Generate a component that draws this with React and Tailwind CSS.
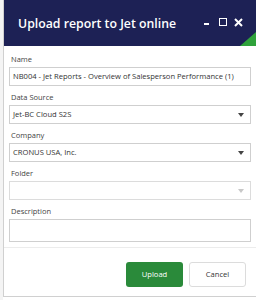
import React from 'react'

function Caret({ light }) {
  return (
    <svg width="6" height="4" viewBox="0 0 6 4" className="shrink-0">
      <path d="M0 0 L6 0 L3 4 Z" fill={light ? '#c8c8c8' : '#444'} />
    </svg>
  )
}

function Field({ label, children }) {
  return (
    <div className="flex flex-col">
      <label className="text-[7.5px] leading-[10px] text-[#444] mb-[3px] pl-[2px]">{label}</label>
      {children}
    </div>
  )
}

export default function App() {
  return (
    <div className="w-[256px] h-[300px] bg-white flex" style={{ fontFamily: '"Open Sans", "Noto Sans", sans-serif' }}>
      <div className="w-[3px] bg-[#f4f4f4]" />
      <div className="flex-1 flex flex-col border-l border-[#d0d0d0] h-[297px] border-b">
        {/* Header */}
        <div className="relative h-[46px] bg-[#1d2155] flex items-center pl-[14px] pr-[13px] overflow-hidden">
          <span className="text-white font-semibold text-[12.3px] mt-[2px]">Upload report to Jet online</span>
          <div className="ml-auto flex items-center gap-[7px] -mt-[2px]">
            <span className="w-[5px] h-[2px] bg-white mt-[4px]" />
            <span className="w-[8px] h-[8px] border-[1.5px] border-white ml-[3px]" />
            <svg width="9" height="9" viewBox="0 0 9 9">
              <path d="M1 1 L8 8 M8 1 L1 8" stroke="white" strokeWidth="2" />
            </svg>
          </div>
          <div className="absolute right-0 bottom-0 w-0 h-0 border-l-[16px] border-l-transparent border-b-[14px] border-b-[#2fa23b]" />
        </div>

        {/* Body */}
        <div className="flex flex-col gap-[6px] px-[5px] pt-[8px]">
          <Field label="Name">
            <div className="h-[19px] border border-[#cfcfcf] flex items-center px-[3px] text-[7.6px] text-[#333] whitespace-nowrap overflow-hidden">
              NB004 - Jet Reports - Overview of Salesperson Performance (1)
            </div>
          </Field>
          <Field label="Data Source">
            <div className="h-[19px] border border-[#cfcfcf] flex items-center px-[3px] pr-[6px] text-[7.6px] text-[#333]">
              <span>Jet-BC Cloud S2S</span>
              <span className="ml-auto"><Caret /></span>
            </div>
          </Field>
          <Field label="Company">
            <div className="h-[19px] border border-[#cfcfcf] flex items-center px-[3px] pr-[6px] text-[7.6px] text-[#333]">
              <span>CRONUS USA, Inc.</span>
              <span className="ml-auto"><Caret /></span>
            </div>
          </Field>
          <Field label="Folder">
            <div className="h-[19px] border border-[#dcdcdc] flex items-center px-[3px] pr-[6px] text-[7.6px]">
              <span className="ml-auto"><Caret light /></span>
            </div>
          </Field>
          <Field label="Description">
            <div className="h-[23px] border border-[#cfcfcf]" />
          </Field>
        </div>

        <div className="mt-[5px] border-t border-[#ececec]" />

        <div className="flex justify-end gap-[6px] pr-[10px] pt-[14px]">
          <button className="w-[57px] h-[25px] rounded-[3px] bg-[#2a8a3a] text-white text-[7.6px]">Upload</button>
          <button className="w-[57px] h-[25px] rounded-[3px] bg-white border border-[#dcdcdc] text-[#333] text-[7.6px]">Cancel</button>
        </div>
      </div>
    </div>
  )
}
